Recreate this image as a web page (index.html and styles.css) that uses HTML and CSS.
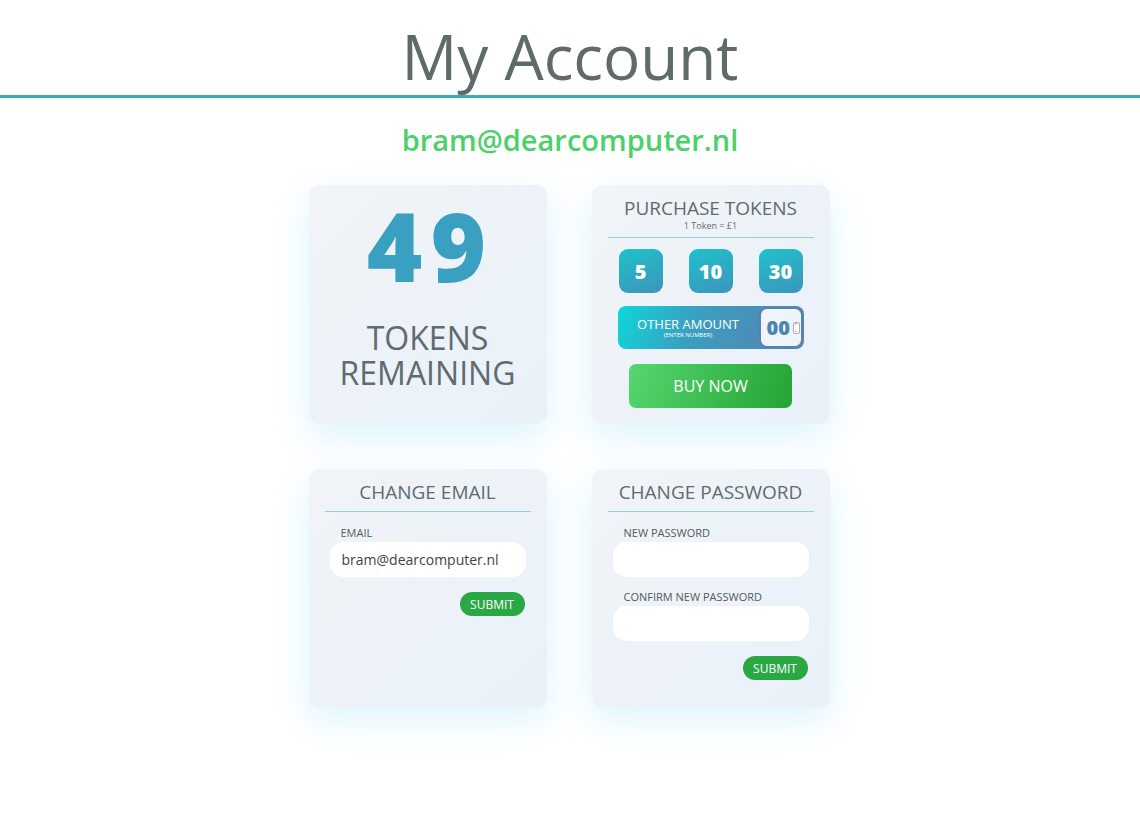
FILE: index.html
```html
<html>
<head>
	<title>My Account</title>
	<link rel="stylesheet" href="styles.css">
</head>
<body>
<div class="header">
	<h1>My Account</h1>
</div>
<div class="userEmail">bram@dearcomputer.nl</div>

<div class="cards">
	<div class="card tokens">
		<div class="tokenCount">49</div>
		<div class="tokenLabel">
			<div>TOKENS</div>
			<div>REMAINING</div>
		</div>
	</div>

	<div class="card">
		<div class="cardTitle">PURCHASE TOKENS</div>
		<div class="cardSub">1 Token = £1</div>
		<div class="rule"></div>
		<div class="amounts">
			<button class="amount">5</button>
			<button class="amount">10</button>
			<button class="amount">30</button>
		</div>
		<div class="otherAmount">
			<div class="otherText">
				<span class="otherMain">OTHER AMOUNT</span>
				<span class="otherHint">(ENTER NUMBER)</span>
			</div>
			<div class="otherInput">
				<input type="text" value="00">
				<span class="spin"><i>&#8963;</i><i>&#8964;</i></span>
			</div>
		</div>
		<button class="buyNow">BUY NOW</button>
	</div>

	<form class="card">
		<div class="cardTitle">CHANGE EMAIL</div>
		<div class="rule"></div>
		<label class="fieldLabel">EMAIL</label>
		<input class="field" type="text" value="bram@dearcomputer.nl">
		<div class="actions"><button class="submit" type="button">SUBMIT</button></div>
	</form>

	<form class="card">
		<div class="cardTitle">CHANGE PASSWORD</div>
		<div class="rule"></div>
		<label class="fieldLabel">NEW PASSWORD</label>
		<input class="field" type="password">
		<label class="fieldLabel">CONFIRM NEW PASSWORD</label>
		<input class="field" type="password">
		<div class="actions"><button class="submit" type="button">SUBMIT</button></div>
	</form>
</div>
</body>
</html>
```

FILE: styles.css
```css
body {
	margin: 0;
	background: #fff;
	font-family: "Open Sans", "Noto Sans", sans-serif;
	color: #5e6b6f;
}

.header {
	border-bottom: 3px solid #36adb8;
	text-align: center;
}
.header h1 {
	margin: 0;
	padding-top: 17px;
	font-size: 62px;
	font-weight: 400;
	line-height: 78px;
	color: #5f6b68;
}

.userEmail {
	margin-top: 22px;
	text-align: center;
	font-size: 29px;
	font-weight: 600;
	color: #4cd06a;
	line-height: 40px;
}

.cards {
	display: grid;
	grid-template-columns: 238px 238px;
	grid-auto-rows: 239px;
	gap: 45px;
	justify-content: center;
	margin-top: 25px;
	padding-right: 2px;
}

.card {
	margin: 0;
	border-radius: 10px;
	background: linear-gradient(135deg, #f1f4f8 0%, #e9f1f9 100%);
	box-shadow: 0 12px 36px rgba(90, 210, 255, 0.22);
	padding: 10px 16px 0 16px;
	display: flex;
	flex-direction: column;
	box-sizing: border-box;
}

.tokens {
	align-items: center;
	padding-top: 0;
}
.tokenCount {
	font-size: 95px;
	font-weight: 800;
	letter-spacing: 8px;
	color: #3aa0c2;
	line-height: 116px;
	margin-top: 2px;
	margin-left: 6px;
}
.tokenLabel {
	margin-top: 17px;
	font-size: 32px;
	line-height: 35px;
	text-align: center;
	color: #5e6b6f;
}

.cardTitle {
	text-align: center;
	font-size: 19px;
	line-height: 26px;
	color: #5e6b6f;
}
.cardSub {
	text-align: center;
	font-size: 9px;
	line-height: 10px;
	color: #5e6b6f;
}
.rule {
	border-top: 1px solid #9ccadd;
	margin-top: 6px;
}

.amounts {
	display: flex;
	justify-content: space-between;
	padding: 0 11px;
	margin-top: 11px;
}
.amount {
	width: 44px;
	height: 44px;
	border: none;
	border-radius: 9px;
	background: linear-gradient(160deg, #1fc1cd 0%, #3c95ba 100%);
	color: #fff;
	font-family: inherit;
	font-size: 20px;
	font-weight: 800;
	padding: 0;
}

.otherAmount {
	display: flex;
	align-items: stretch;
	height: 43px;
	margin: 13px 10px 0 10px;
	border-radius: 8px;
	background: linear-gradient(110deg, #10d6d8 0%, #3a9fc0 40%, #5a80b0 100%);
}
.otherText {
	flex: 1;
	display: flex;
	flex-direction: column;
	align-items: center;
	justify-content: center;
	color: #fff;
}
.otherMain {
	font-size: 13px;
	line-height: 14px;
}
.otherHint {
	font-size: 6px;
	line-height: 8px;
}
.otherInput {
	width: 44px;
	margin: 1px 1px 1px 0;
	border: 2px solid #5b82ae;
	border-radius: 8px;
	background: #eef4f9;
	display: flex;
	align-items: center;
	box-sizing: border-box;
}
.otherInput input {
	width: 32px;
	border: none;
	background: transparent;
	font-family: inherit;
	font-size: 20px;
	font-weight: 800;
	color: #4c85b0;
	padding: 0 0 0 6px;
	outline: none;
}
.spin {
	display: flex;
	flex-direction: column;
	width: 5px;
	height: 10px;
	border: 1px solid #aab;
	border-radius: 2px;
	background: #fff;
	font-size: 5px;
	line-height: 5px;
	color: #444;
	overflow: hidden;
}
.spin i {
	font-style: normal;
	text-align: center;
}

.buyNow {
	align-self: center;
	width: 163px;
	height: 44px;
	margin-top: 15px;
	border: none;
	border-radius: 7px;
	background: linear-gradient(110deg, #56d670 0%, #23a434 100%);
	color: #fff;
	font-family: inherit;
	font-size: 16px;
}

.fieldLabel {
	display: block;
	margin: 13px 0 0 16px;
	font-size: 11px;
	line-height: 15px;
	color: #4f5b60;
}
.field {
	margin: 2px 5px 0 5px;
	height: 35px;
	border: none;
	border-radius: 14px;
	background: #fff;
	font-family: inherit;
	font-size: 14px;
	color: #3c4347;
	padding: 0 12px;
	outline: none;
}
.field + .fieldLabel {
	margin-top: 12px;
}

.actions {
	display: flex;
	justify-content: flex-end;
	margin: 15px 6px 0 0;
}
.submit {
	width: 65px;
	height: 24px;
	border: none;
	border-radius: 12px;
	background: #2aa843;
	color: #fff;
	font-family: inherit;
	font-size: 12px;
	padding: 0;
}
```
